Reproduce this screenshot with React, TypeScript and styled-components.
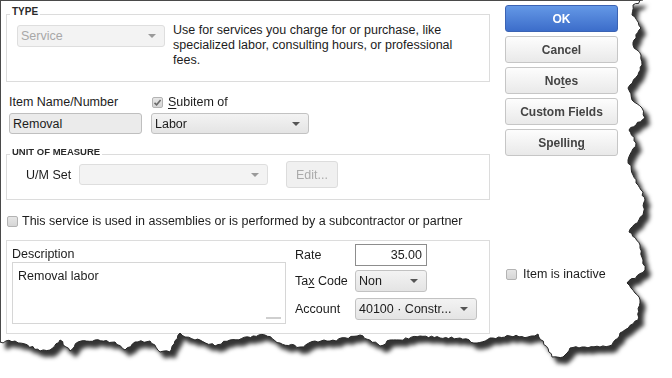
import React from "react";
import styled, { createGlobalStyle } from "styled-components";

const GlobalStyle = createGlobalStyle`
  html, body { margin: 0; padding: 0; background: #fff; }
  body {
    font-family: "Liberation Sans", Arial, sans-serif;
    font-size: 12.5px;
    color: #1c1c1c;
  }
`;

// rough outline of the torn right and bottom edges
const EDGE: [number, number][] = [
  [643, 0], [633, 5], [632, 15], [641, 28], [634, 40], [633, 45], [641, 55], [642, 65],
  [638, 75], [628, 88], [632, 100], [642, 108], [645, 118], [629, 130], [636, 143],
  [628, 160], [633, 175], [641, 190], [645, 200], [643, 215], [629, 232], [640, 245],
  [643, 260], [645, 270], [627, 283], [635, 293], [640, 300], [638, 320], [620, 333],
  [612, 345], [600, 347], [585, 347], [570, 348], [563, 357], [552, 357], [538, 334],
  [528, 337], [510, 336], [490, 338], [477, 343], [460, 338], [440, 338], [420, 336],
  [400, 340], [390, 340], [380, 346], [360, 335], [330, 341], [315, 341], [300, 347],
  [280, 343], [265, 335], [230, 340], [215, 346], [200, 340], [195, 340], [185, 337],
  [180, 333], [170, 352], [160, 352], [150, 341], [135, 342], [125, 350], [115, 342],
  [95, 340], [78, 342], [70, 351], [60, 340], [50, 350], [40, 351], [25, 344],
  [15, 341], [0, 342],
];

const jag = (pts: [number, number][]) => {
  const out: [number, number][] = [];
  for (let i = 0; i < pts.length - 1; i++) {
    const [x1, y1] = pts[i];
    const [x2, y2] = pts[i + 1];
    const len = Math.hypot(x2 - x1, y2 - y1);
    const n = Math.max(1, Math.round(len / 3));
    const nx = -(y2 - y1) / len;
    const ny = (x2 - x1) / len;
    for (let k = 0; k < n; k++) {
      const t = k / n;
      const r = Math.sin((i * 31 + k) * 12.9898) * 43758.5453;
      const j = k === 0 ? 0 : ((r - Math.floor(r)) - 0.5) * 2.4;
      out.push([x1 + (x2 - x1) * t + nx * j, y1 + (y2 - y1) * t + ny * j]);
    }
  }
  out.push(pts[pts.length - 1]);
  return out;
};

const TORN = jag(EDGE);
const CLIP = `polygon(0px 0px, ${TORN.map(([x, y]) => `${x.toFixed(1)}px ${y.toFixed(1)}px`).join(", ")})`;
const LINE = TORN.map(([x, y]) => `${x.toFixed(1)},${y.toFixed(1)}`).join(" ");

const Frame = styled.div`
  position: relative;
  width: 672px;
  height: 378px;
  filter: drop-shadow(5px 6px 2px rgba(0, 0, 0, 0.8));
`;

const Sheet = styled.div<{ $clip: string }>`
  box-sizing: border-box;
  width: 672px;
  height: 378px;
  background: #fff;
  border-top: 1px solid #4a4a4a;
  border-left: 1px solid #4a4a4a;
  padding: 4px 0 0 5px;
  display: grid;
  grid-template-columns: 484px 113px;
  column-gap: 15px;
  align-items: start;
  clip-path: ${(p) => p.$clip};
`;

const EdgeLine = styled.svg`
  position: absolute;
  inset: 0;
  pointer-events: none;
`;

const Main = styled.div`
  display: flex;
  flex-direction: column;
`;

const Group = styled.div<{ $top: number; $height: number }>`
  box-sizing: border-box;
  margin-top: ${(p) => p.$top}px;
  height: ${(p) => p.$height}px;
  border: 1px solid #dcdcdc;
`;

const Legend = styled.div<{ $size?: number }>`
  width: fit-content;
  margin: -8px 0 0 3px;
  padding: 0 2px;
  background: #fff;
  font-weight: bold;
  font-size: ${(p) => p.$size ?? 10}px;
  line-height: 10px;
  color: #2a2a2a;
`;

const TypeRow = styled.div`
  display: flex;
  gap: 8px;
  margin: 8px 0 0 10px;
`;

const TypeText = styled.div`
  width: 292px;
  margin-top: -2px;
  line-height: 15px;
`;

const Select = styled.div<{ $width: number; $height?: number; $disabled?: boolean }>`
  box-sizing: border-box;
  flex: none;
  width: ${(p) => p.$width}px;
  height: ${(p) => p.$height ?? 22}px;
  display: flex;
  align-items: center;
  padding: 0 8px 0 3px;
  border: 1px solid ${(p) => (p.$disabled ? "#dedede" : "#c2c2c2")};
  border-radius: 3px;
  background: ${(p) =>
    p.$disabled ? "#f3f3f3" : "linear-gradient(#f3f3f3, #e4e4e4)"};
  color: ${(p) => (p.$disabled ? "#a8a8a8" : "#1c1c1c")};
  white-space: nowrap;

  &::after {
    content: "";
    margin-left: auto;
    border-left: 4px solid transparent;
    border-right: 4px solid transparent;
    border-top: 4px solid ${(p) => (p.$disabled ? "#9a9a9a" : "#555")};
  }
`;

const TextInput = styled.div<{ $width: number }>`
  box-sizing: border-box;
  width: ${(p) => p.$width}px;
  height: 21px;
  display: flex;
  align-items: center;
  padding: 0 3px;
  border: 1px solid #bfbfbf;
  border-radius: 3px;
  background: #ebebeb;
`;

const NameRow = styled.div`
  display: flex;
  gap: 9px;
  margin: 13px 0 0 3px;
`;

const Field = styled.div`
  display: flex;
  flex-direction: column;
  gap: 4px;
`;

const Label = styled.div`
  line-height: 14px;
  white-space: nowrap;
`;

const CheckLabel = styled.label<{ $indent?: number }>`
  display: flex;
  align-items: center;
  gap: 5px;
  line-height: 14px;
  padding-left: ${(p) => p.$indent ?? 0}px;
  white-space: nowrap;
`;

const Box = styled.span`
  box-sizing: border-box;
  width: 11px;
  height: 11px;
  flex: none;
  display: flex;
  align-items: center;
  justify-content: center;
  border: 1px solid #b3b3b3;
  border-radius: 2px;
  background: linear-gradient(#e6e6e6, #d6d6d6);
`;

const Key = styled.u`
  text-decoration-thickness: 1px;
  text-underline-offset: 2px;
`;

const UomRow = styled.div`
  display: flex;
  align-items: center;
  margin: 4px 0 0 19px;
`;

const UomLabel = styled.div`
  width: 53px;
`;

const GhostButton = styled.div`
  box-sizing: border-box;
  width: 52px;
  height: 27px;
  margin-left: 18px;
  display: flex;
  align-items: center;
  justify-content: center;
  border: 1px solid #dcdcdc;
  border-radius: 3px;
  background: #f0f0f0;
  color: #ababab;
`;

const ServiceRow = styled(CheckLabel)`
  margin-top: 14px;
  gap: 4px;
`;

const DetailGrid = styled.div`
  display: flex;
  gap: 9px;
  padding: 0 0 0 5px;
`;

const DescCol = styled.div`
  display: flex;
  flex-direction: column;
  gap: 1px;
  padding-top: 6px;
`;

const Memo = styled.div`
  box-sizing: border-box;
  width: 274px;
  height: 62px;
  padding: 6px 5px;
  border: 1px solid #d6d6d6;
  display: flex;
  flex-direction: column;
  justify-content: space-between;
  line-height: 14px;

  &::after {
    content: "";
    align-self: flex-end;
    width: 15px;
    height: 2px;
    margin: 0 -1px -2px 0;
    background: #cfcfcf;
  }
`;

const PriceCol = styled.div`
  display: grid;
  grid-template-columns: 60px auto;
  grid-template-rows: 22px 22px 22px;
  row-gap: 4px;
  align-items: center;
  justify-items: start;
  padding-top: 3px;

  & > :nth-child(5),
  & > :nth-child(6) {
    margin-top: 4px;
  }
`;

const RateInput = styled.div`
  box-sizing: border-box;
  width: 72px;
  height: 22px;
  display: flex;
  align-items: center;
  justify-content: flex-end;
  padding: 0 4px;
  border: 1px solid #8d8d8d;
  background: #fff;
`;

const Side = styled.div`
  display: flex;
  flex-direction: column;
  gap: 4px;
`;

const Button = styled.div<{ $primary?: boolean }>`
  box-sizing: border-box;
  height: 27px;
  display: flex;
  align-items: center;
  justify-content: center;
  border: 1px solid ${(p) => (p.$primary ? "#3b63b3" : "#c6c6c6")};
  border-radius: 3px;
  background: ${(p) =>
    p.$primary
      ? "linear-gradient(#6498e6, #3c6dca)"
      : "linear-gradient(#fdfdfd, #e9e9e9)"};
  color: ${(p) => (p.$primary ? "#fff" : "#444")};
  font-weight: bold;
  font-size: 12px;
`;

const Inactive = styled(CheckLabel)`
  margin-top: 107px;
  gap: 6px;
`;

const Check = ({ checked }: { checked?: boolean }) => (
  <Box>
    {checked && (
      <svg width="9" height="9" viewBox="0 0 9 9">
        <path d="M1.5 4.8 L3.6 6.8 L7.6 2" fill="none" stroke="#6a6a6a" strokeWidth="1.6" />
      </svg>
    )}
  </Box>
);

export default function App() {
  return (
    <>
      <GlobalStyle />
      <Frame>
        <Sheet $clip={CLIP}>
          <Main>
            <Group $top={9} $height={68}>
              <Legend>TYPE</Legend>
              <TypeRow>
                <Select $width={148} $disabled>Service</Select>
                <TypeText>
                  Use for services you charge for or purchase, like specialized labor,
                  consulting hours, or professional fees.
                </TypeText>
              </TypeRow>
            </Group>

            <NameRow>
              <Field>
                <Label>Item Name/Number</Label>
                <TextInput $width={133}>Removal</TextInput>
              </Field>
              <Field>
                <CheckLabel $indent={1}>
                  <Check checked />
                  <span>
                    <Key>S</Key>ubitem of
                  </span>
                </CheckLabel>
                <Select $width={158} $height={21}>Labor</Select>
              </Field>
            </NameRow>

            <Group $top={20} $height={46}>
              <Legend $size={9.5}>UNIT OF MEASURE</Legend>
              <UomRow>
                <UomLabel>U/M Set</UomLabel>
                <Select $width={189} $height={21} $disabled />
                <GhostButton>Edit...</GhostButton>
              </UomRow>
            </Group>

            <ServiceRow $indent={1}>
              <Check />
              This service is used in assemblies or is performed by a subcontractor or partner
            </ServiceRow>

            <Group $top={12} $height={94}>
              <DetailGrid>
                <DescCol>
                  <Label>Description</Label>
                  <Memo>Removal labor</Memo>
                </DescCol>
                <PriceCol>
                  <Label>Rate</Label>
                  <RateInput>35.00</RateInput>
                  <Label>
                    Ta<Key>x</Key> Code
                  </Label>
                  <Select $width={72}>Non</Select>
                  <Label>Account</Label>
                  <Select $width={122}>40100 · Constr...</Select>
                </PriceCol>
              </DetailGrid>
            </Group>
          </Main>

          <Side>
            <Button $primary>OK</Button>
            <Button>Cancel</Button>
            <Button>
              <span>
                No<Key>t</Key>es
              </span>
            </Button>
            <Button>Custom Fields</Button>
            <Button>
              <span>
                Spellin<Key>g</Key>
              </span>
            </Button>
            <Inactive $indent={1}>
              <Check />
              Item is inactive
            </Inactive>
          </Side>
        </Sheet>
        <EdgeLine width="672" height="378" viewBox="0 0 672 378">
          <polyline points={LINE} fill="none" stroke="#262626" strokeWidth="1" />
        </EdgeLine>
      </Frame>
    </>
  );
}
